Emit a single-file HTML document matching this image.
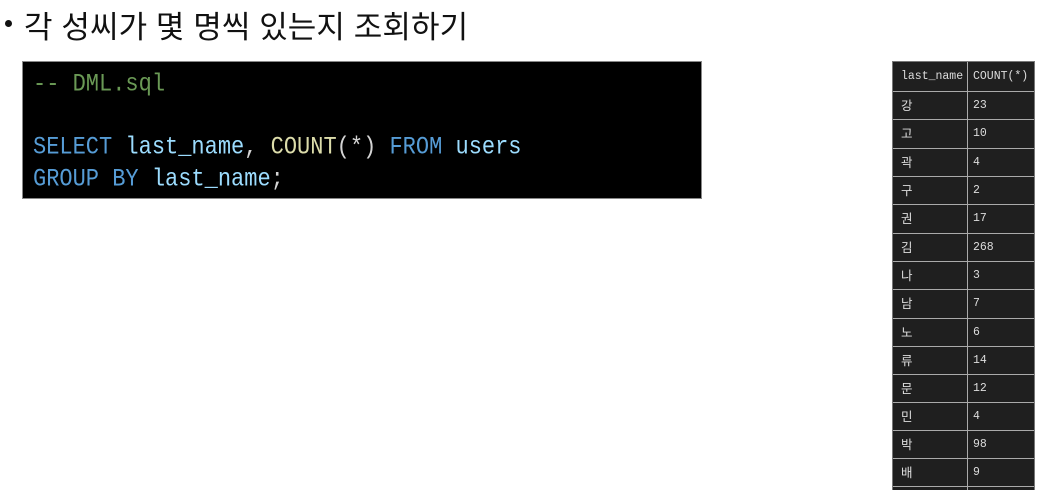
<!DOCTYPE html>
<html><head><meta charset="utf-8"><style>
html,body{margin:0;width:1039px;height:490px;overflow:hidden}
body{background:#fff;position:relative;font-family:"Liberation Sans","Noto Sans CJK KR",sans-serif}
.t{position:absolute;left:24px;top:2px;font-size:31px;color:#111;white-space:nowrap;letter-spacing:0.1px}
.b{position:absolute;left:5px;top:20px;width:7px;height:7px;border-radius:50%;background:#111}
.code{position:absolute;left:22px;top:61px;width:680px;height:138px;background:#000;border:1px solid #888;box-sizing:border-box}
.l{position:absolute;left:10px;font-family:"Liberation Mono",monospace;font-size:22px;white-space:pre;transform:scaleY(1.15);transform-origin:left top;color:#9cdcfe}
.k{color:#569cd6}.f{color:#dcdcaa}.w{color:#d4d4d4}.c{color:#6a9955}
.tb{position:absolute;left:892px;top:61px;width:143px;height:429px;background:#1f1f1f;border:1px solid #777;border-bottom:none;box-sizing:border-box;overflow:hidden}
.r{position:absolute;left:0;width:141px;height:28px;border-top:1px solid #aaa;font-family:"Liberation Mono","Noto Sans CJK KR",monospace;font-size:11.5px;color:#ddd}
.r span{position:absolute;top:0;line-height:28px;height:28px}
.r span:first-child{left:8px;font-size:12.5px;top:1px}.r span:last-child{left:80px}
.v{position:absolute;left:74px;top:0;width:1px;height:428px;background:#aaa}
</style></head><body>
<div class="b"></div>
<div class="t">각 성씨가 몇 명씩 있는지 조회하기</div>
<div class="code">
<div class="l c" style="top:8px">-- DML.sql</div>
<div class="l" style="top:71px"><span class="k">SELECT</span> last_name<span class="w">,</span> <span class="f">COUNT</span><span class="w">(*)</span> <span class="k">FROM</span> users</div>
<div class="l" style="top:103px"><span class="k">GROUP BY</span> last_name<span class="w">;</span></div>
</div>
<div class="tb">
<div class="v"></div>
<div class="r" style="top:0;border-top:none;height:29px"><span style="line-height:29px;font-size:11.5px;top:0">last_name</span><span style="line-height:29px">COUNT(*)</span></div>
<div class="r" style="top:29px"><span>강</span><span>23</span></div>
<div class="r" style="top:57px"><span>고</span><span>10</span></div>
<div class="r" style="top:86px"><span>곽</span><span>4</span></div>
<div class="r" style="top:114px"><span>구</span><span>2</span></div>
<div class="r" style="top:142px"><span>권</span><span>17</span></div>
<div class="r" style="top:171px"><span>김</span><span>268</span></div>
<div class="r" style="top:199px"><span>나</span><span>3</span></div>
<div class="r" style="top:227px"><span>남</span><span>7</span></div>
<div class="r" style="top:256px"><span>노</span><span>6</span></div>
<div class="r" style="top:284px"><span>류</span><span>14</span></div>
<div class="r" style="top:312px"><span>문</span><span>12</span></div>
<div class="r" style="top:340px"><span>민</span><span>4</span></div>
<div class="r" style="top:368px"><span>박</span><span>98</span></div>
<div class="r" style="top:396px;height:27px"><span>배</span><span>9</span></div>
<div class="r" style="top:424px;height:3px"></div>
</div>
</body></html>
